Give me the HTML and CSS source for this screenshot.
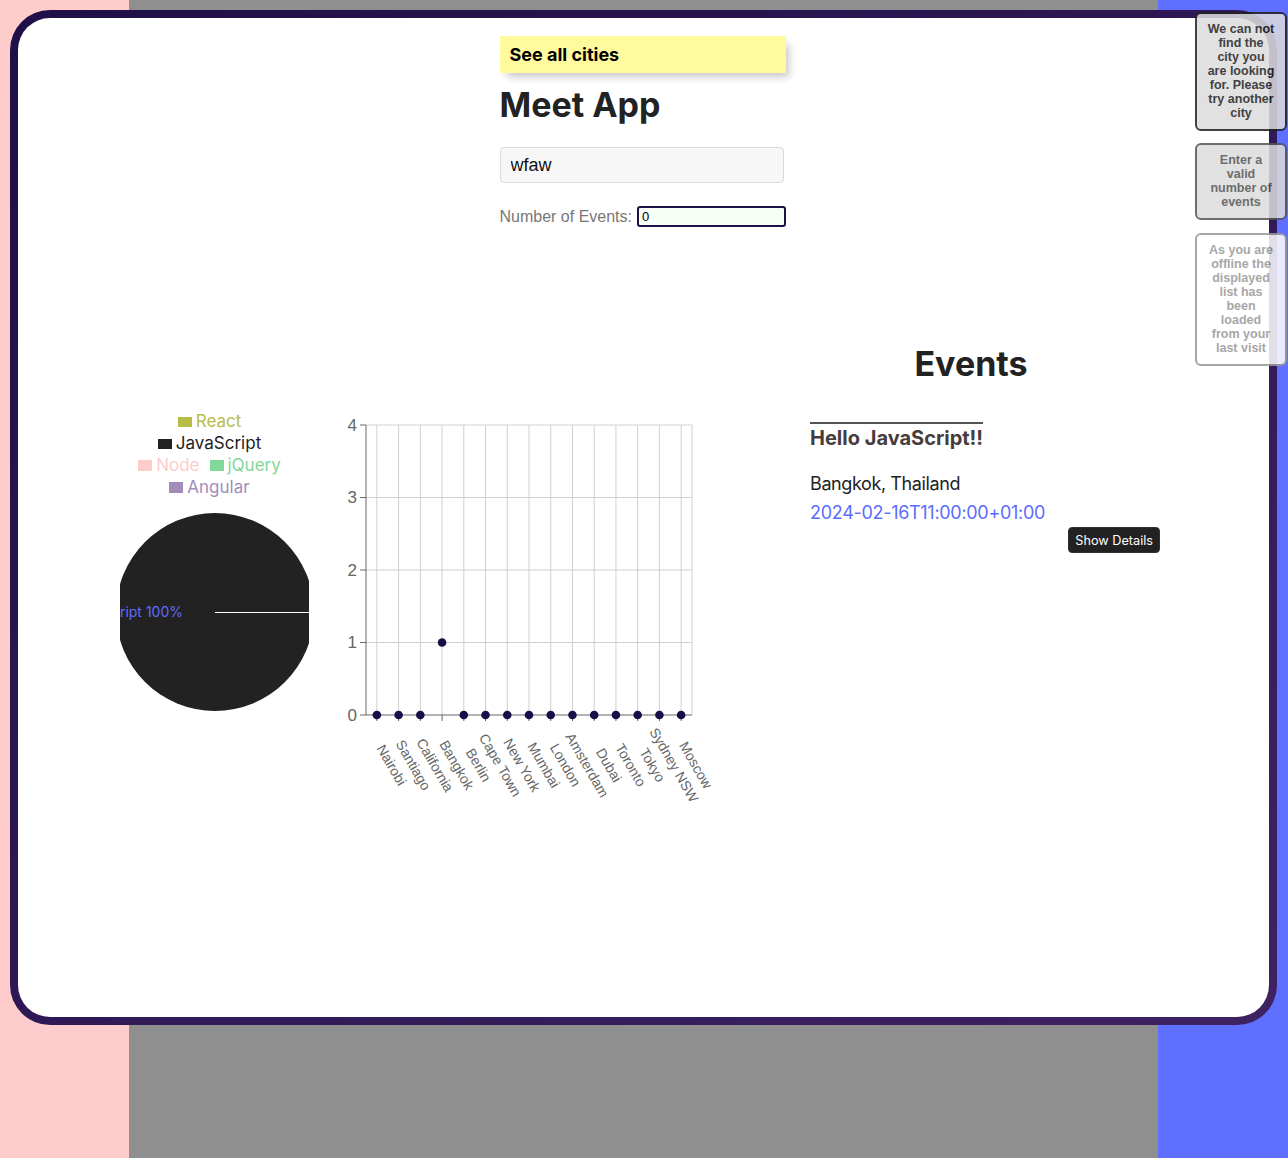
FILE: index.html
```html
<!DOCTYPE html>
<html lang="en">
<head>
<meta charset="utf-8">
<title>Meet App</title>
<link rel="stylesheet" href="styles.css">
</head>
<body>
<div class="frame">
  <div class="inner">
    <section class="top">
      <div class="see-all">See all cities</div>
      <h1 class="app-title">Meet App</h1>
      <input class="city-input" type="text" value="wfaw">
      <div class="num-row">
        <label class="num-label" for="num">Number of Events:</label>
        <input class="num-input" id="num" type="text" value="0">
      </div>
    </section>

    <section class="main">
      <div class="charts">
        <div class="pie-block">
          <div class="legend">
            <div class="legend-row"><span class="legend-item c-react"><span class="swatch"></span>React</span></div>
            <div class="legend-row"><span class="legend-item c-js"><span class="swatch"></span>JavaScript</span></div>
            <div class="legend-row"><span class="legend-item c-node"><span class="swatch"></span>Node</span><span class="legend-item c-jq"><span class="swatch"></span>jQuery</span></div>
            <div class="legend-row"><span class="legend-item c-ng"><span class="swatch"></span>Angular</span></div>
          </div>
          <svg class="pie" width="189" height="220" viewBox="0 0 189 220">
            <circle cx="95" cy="113" r="99" fill="#222222"/>
            <line x1="95" y1="113.5" x2="189" y2="113.5" stroke="#ffffff" stroke-width="1"/>
            <text class="pie-label" x="63" y="118" text-anchor="end">JavaScript 100%</text>
          </svg>
        </div>

        <svg class="scatter" width="390" height="410" viewBox="0 0 390 410">
          <g class="grid">
            <line x1="36" y1="15" x2="362" y2="15"/>
            <line x1="36" y1="87.5" x2="362" y2="87.5"/>
            <line x1="36" y1="160" x2="362" y2="160"/>
            <line x1="36" y1="232.5" x2="362" y2="232.5"/>
            <line x1="46.87" y1="15" x2="46.87" y2="305"/>
            <line x1="68.6" y1="15" x2="68.6" y2="305"/>
            <line x1="90.33" y1="15" x2="90.33" y2="305"/>
            <line x1="112.07" y1="15" x2="112.07" y2="305"/>
            <line x1="133.8" y1="15" x2="133.8" y2="305"/>
            <line x1="155.53" y1="15" x2="155.53" y2="305"/>
            <line x1="177.27" y1="15" x2="177.27" y2="305"/>
            <line x1="199" y1="15" x2="199" y2="305"/>
            <line x1="220.73" y1="15" x2="220.73" y2="305"/>
            <line x1="242.47" y1="15" x2="242.47" y2="305"/>
            <line x1="264.2" y1="15" x2="264.2" y2="305"/>
            <line x1="285.93" y1="15" x2="285.93" y2="305"/>
            <line x1="307.67" y1="15" x2="307.67" y2="305"/>
            <line x1="329.4" y1="15" x2="329.4" y2="305"/>
            <line x1="351.13" y1="15" x2="351.13" y2="305"/>
            <line x1="362" y1="15" x2="362" y2="305"/>
          </g>
          <g class="axis">
            <line x1="36" y1="15" x2="36" y2="305"/>
            <line x1="36" y1="305" x2="362" y2="305"/>
            <line x1="30" y1="15" x2="36" y2="15"/>
            <line x1="30" y1="87.5" x2="36" y2="87.5"/>
            <line x1="30" y1="160" x2="36" y2="160"/>
            <line x1="30" y1="232.5" x2="36" y2="232.5"/>
            <line x1="30" y1="305" x2="36" y2="305"/>
            <line x1="46.87" y1="305" x2="46.87" y2="311"/>
            <line x1="68.6" y1="305" x2="68.6" y2="311"/>
            <line x1="90.33" y1="305" x2="90.33" y2="311"/>
            <line x1="112.07" y1="305" x2="112.07" y2="311"/>
            <line x1="133.8" y1="305" x2="133.8" y2="311"/>
            <line x1="155.53" y1="305" x2="155.53" y2="311"/>
            <line x1="177.27" y1="305" x2="177.27" y2="311"/>
            <line x1="199" y1="305" x2="199" y2="311"/>
            <line x1="220.73" y1="305" x2="220.73" y2="311"/>
            <line x1="242.47" y1="305" x2="242.47" y2="311"/>
            <line x1="264.2" y1="305" x2="264.2" y2="311"/>
            <line x1="285.93" y1="305" x2="285.93" y2="311"/>
            <line x1="307.67" y1="305" x2="307.67" y2="311"/>
            <line x1="329.4" y1="305" x2="329.4" y2="311"/>
            <line x1="351.13" y1="305" x2="351.13" y2="311"/>
          </g>
          <g class="ytick">
            <text x="27" y="20.5" text-anchor="end">4</text>
            <text x="27" y="93" text-anchor="end">3</text>
            <text x="27" y="165.5" text-anchor="end">2</text>
            <text x="27" y="238" text-anchor="end">1</text>
            <text x="27" y="310.5" text-anchor="end">0</text>
          </g>
          <g class="xtick">
            <text x="57.37" y="357.5" text-anchor="middle" transform="rotate(60 57.37 357.5)">Nairobi</text>
            <text x="79.1" y="357.5" text-anchor="middle" transform="rotate(60 79.1 357.5)">Santiago</text>
            <text x="100.83" y="357.5" text-anchor="middle" transform="rotate(60 100.83 357.5)">California</text>
            <text x="122.57" y="357.5" text-anchor="middle" transform="rotate(60 122.57 357.5)">Bangkok</text>
            <text x="144.3" y="357.5" text-anchor="middle" transform="rotate(60 144.3 357.5)">Berlin</text>
            <text x="166.03" y="357.5" text-anchor="middle" transform="rotate(60 166.03 357.5)">Cape Town</text>
            <text x="187.77" y="357.5" text-anchor="middle" transform="rotate(60 187.77 357.5)">New York</text>
            <text x="209.5" y="357.5" text-anchor="middle" transform="rotate(60 209.5 357.5)">Mumbai</text>
            <text x="231.23" y="357.5" text-anchor="middle" transform="rotate(60 231.23 357.5)">London</text>
            <text x="252.97" y="357.5" text-anchor="middle" transform="rotate(60 252.97 357.5)">Amsterdam</text>
            <text x="274.7" y="357.5" text-anchor="middle" transform="rotate(60 274.7 357.5)">Dubai</text>
            <text x="296.43" y="357.5" text-anchor="middle" transform="rotate(60 296.43 357.5)">Toronto</text>
            <text x="318.17" y="357.5" text-anchor="middle" transform="rotate(60 318.17 357.5)">Tokyo</text>
            <text x="339.9" y="357.5" text-anchor="middle" transform="rotate(60 339.9 357.5)">Sydney NSW</text>
            <text x="361.63" y="357.5" text-anchor="middle" transform="rotate(60 361.63 357.5)">Moscow</text>
          </g>
          <g class="dots">
            <circle cx="46.87" cy="305" r="4.3"/>
            <circle cx="68.6" cy="305" r="4.3"/>
            <circle cx="90.33" cy="305" r="4.3"/>
            <circle cx="112.07" cy="232.5" r="4.3"/>
            <circle cx="133.8" cy="305" r="4.3"/>
            <circle cx="155.53" cy="305" r="4.3"/>
            <circle cx="177.27" cy="305" r="4.3"/>
            <circle cx="199" cy="305" r="4.3"/>
            <circle cx="220.73" cy="305" r="4.3"/>
            <circle cx="242.47" cy="305" r="4.3"/>
            <circle cx="264.2" cy="305" r="4.3"/>
            <circle cx="285.93" cy="305" r="4.3"/>
            <circle cx="307.67" cy="305" r="4.3"/>
            <circle cx="329.4" cy="305" r="4.3"/>
            <circle cx="351.13" cy="305" r="4.3"/>
          </g>
        </svg>
      </div>

      <div class="events-col">
        <h1 class="events-title">Events</h1>
        <ul class="event-list">
          <li class="event">
            <h2 class="event-name">Hello JavaScript!!</h2>
            <p class="event-location">Bangkok, Thailand</p>
            <p class="event-date">2024-02-16T11:00:00+01:00</p>
            <div class="event-actions"><button class="details-btn" type="button">Show Details</button></div>
          </li>
        </ul>
      </div>
    </section>
  </div>
</div>

<div class="alerts">
  <div class="alert alert-error">We can not find the city you are looking for. Please try another city</div>
  <div class="alert alert-warn">Enter a valid number of events</div>
  <div class="alert alert-info">As you are offline the displayed list has been loaded from your last visit</div>
</div>
</body>
</html>
```

FILE: styles.css
```css
html, body {
  margin: 0;
  padding: 0;
  height: 100%;
}

body {
  min-height: 1158px;
  background: linear-gradient(to right, #ffcccc 0, #ffcccc 129px, #8f8f8f 129px, #8f8f8f 1158px, #5f6fff 1158px);
  font-family: Inter, "Liberation Sans", sans-serif;
  color: #222222;
  overflow: hidden;
}

.frame {
  box-sizing: border-box;
  margin: 10px 0 0 10px;
  width: 1267px;
  height: 1015px;
  padding: 8px;
  border-radius: 40px;
  background: linear-gradient(to bottom right, #1f0f48, #3e2262);
}

.inner {
  box-sizing: border-box;
  height: 100%;
  background: #ffffff;
  border-radius: 32px;
  overflow: hidden;
}

/* ---------- top ---------- */
.top {
  width: 288px;
  margin: 0 auto;
  padding-top: 18px;
}

.see-all {
  box-sizing: border-box;
  width: 286px;
  height: 37px;
  line-height: 38px;
  padding-left: 10px;
  background: #fffa9e;
  font-size: 18px;
  font-weight: 700;
  color: #000000;
  box-shadow: 5px 6px 8px -2px rgba(0, 0, 0, 0.22);
}

.app-title {
  margin: 11px 0 0;
  font-size: 34px;
  line-height: 41px;
  font-weight: 700;
  color: #222222;
}

.city-input {
  display: block;
  box-sizing: border-box;
  width: 284px;
  height: 36px;
  margin: 22px 0 0;
  padding: 0 10px;
  border: 1px solid #d9d9d9;
  border-radius: 4px;
  background: #f7f7f7;
  font-family: "Liberation Sans", Arial, sans-serif;
  font-size: 18px;
  color: #111111;
  outline: none;
}

.num-row {
  display: flex;
  align-items: center;
  margin-top: 23px;
}

.num-label {
  font-family: "Liberation Sans", Arial, sans-serif;
  font-size: 16px;
  color: #777777;
  margin-right: 5px;
}

.num-input {
  box-sizing: border-box;
  width: 149px;
  height: 21px;
  margin: 0;
  padding: 0 3px;
  border: 2px solid #1f1146;
  border-radius: 3px;
  background: #f8fff6;
  font-family: "Liberation Sans", Arial, sans-serif;
  font-size: 13px;
  color: #000000;
  outline: none;
}

/* ---------- main ---------- */
.main {
  display: flex;
  margin-top: 103px;
}

.charts {
  box-sizing: border-box;
  width: 737px;
  padding-left: 102px;
  display: flex;
  align-items: flex-start;
}

.pie-block {
  width: 189px;
  padding-top: 81px;
}

.legend {
  font-size: 17px;
  line-height: 21.75px;
}

.legend-row {
  text-align: center;
  white-space: nowrap;
}

.legend-item {
  display: inline-flex;
  align-items: center;
  margin-right: 10px;
}

.swatch {
  display: inline-block;
  width: 14px;
  height: 10.5px;
  margin-right: 4px;
  background: currentColor;
}

.c-react { color: #b7bd45; }
.c-js { color: #222222; }
.c-node { color: #ffcccc; }
.c-jq { color: #82d89b; }
.c-ng { color: #a48cba; }

.pie {
  display: block;
}

.pie-label {
  font-family: Inter, "Liberation Sans", sans-serif;
  font-size: 14px;
  fill: #5b6cff;
}

.scatter {
  display: block;
  margin: 80px 0 0 21px;
  overflow: visible;
}

.grid line {
  stroke: #d0d0d0;
  stroke-width: 1;
}

.axis line {
  stroke: #666666;
  stroke-width: 1;
}

.ytick text {
  font-family: "Liberation Sans", Arial, sans-serif;
  font-size: 17px;
  fill: #666666;
}

.xtick text {
  font-family: "Liberation Sans", Arial, sans-serif;
  font-size: 14px;
  fill: #666666;
}

.dots circle {
  fill: #1b0e48;
}

/* ---------- events ---------- */
.events-col {
  width: 432px;
}

.events-title {
  margin: 13px 0 0;
  font-size: 34px;
  line-height: 41px;
  font-weight: 700;
  text-align: center;
  color: #222222;
}

.event-list {
  list-style: none;
  margin: 38px 0 0;
  padding: 0 0 0 55px;
}

.event {
  width: 350px;
}

.event-name {
  display: inline-block;
  margin: 0;
  padding-top: 2px;
  border-top: 2px solid #555555;
  font-size: 20px;
  line-height: 24px;
  font-weight: 700;
  color: #463c3c;
}

.event-location {
  margin: 22.5px 0 0;
  font-size: 18px;
  line-height: 22px;
  letter-spacing: -0.4px;
  color: #222222;
}

.event-date {
  margin: 7px 0 0;
  font-size: 18px;
  line-height: 22px;
  letter-spacing: -0.3px;
  color: #5b6cff;
}

.event-actions {
  display: flex;
  justify-content: flex-end;
  margin-top: 3.5px;
}

.details-btn {
  height: 26px;
  padding: 0 6px;
  border: 1px solid #333333;
  border-radius: 4px;
  background: #222222;
  color: #ffffff;
  font-family: Inter, "Liberation Sans", sans-serif;
  font-size: 12.7px;
}

/* ---------- alerts ---------- */
.alerts {
  position: fixed;
  top: 12px;
  right: 1px;
  width: 92px;
  display: flex;
  flex-direction: column;
  gap: 12px;
}

.alert {
  box-sizing: border-box;
  width: 92px;
  padding: 8px 10px 9px;
  border: 2px solid;
  border-radius: 6px;
  font-family: "Liberation Sans", Arial, sans-serif;
  font-size: 12.5px;
  line-height: 14px;
  font-weight: 700;
  text-align: center;
  opacity: 0.86;
}

.alert-error {
  background: #dddddd;
  border-color: #222222;
  color: #222222;
}

.alert-warn {
  background: #dddddd;
  border-color: #555555;
  color: #555555;
}

.alert-info {
  margin-top: 1px;
  background: #ffffff;
  border-color: #999999;
  color: #999999;
}
```
